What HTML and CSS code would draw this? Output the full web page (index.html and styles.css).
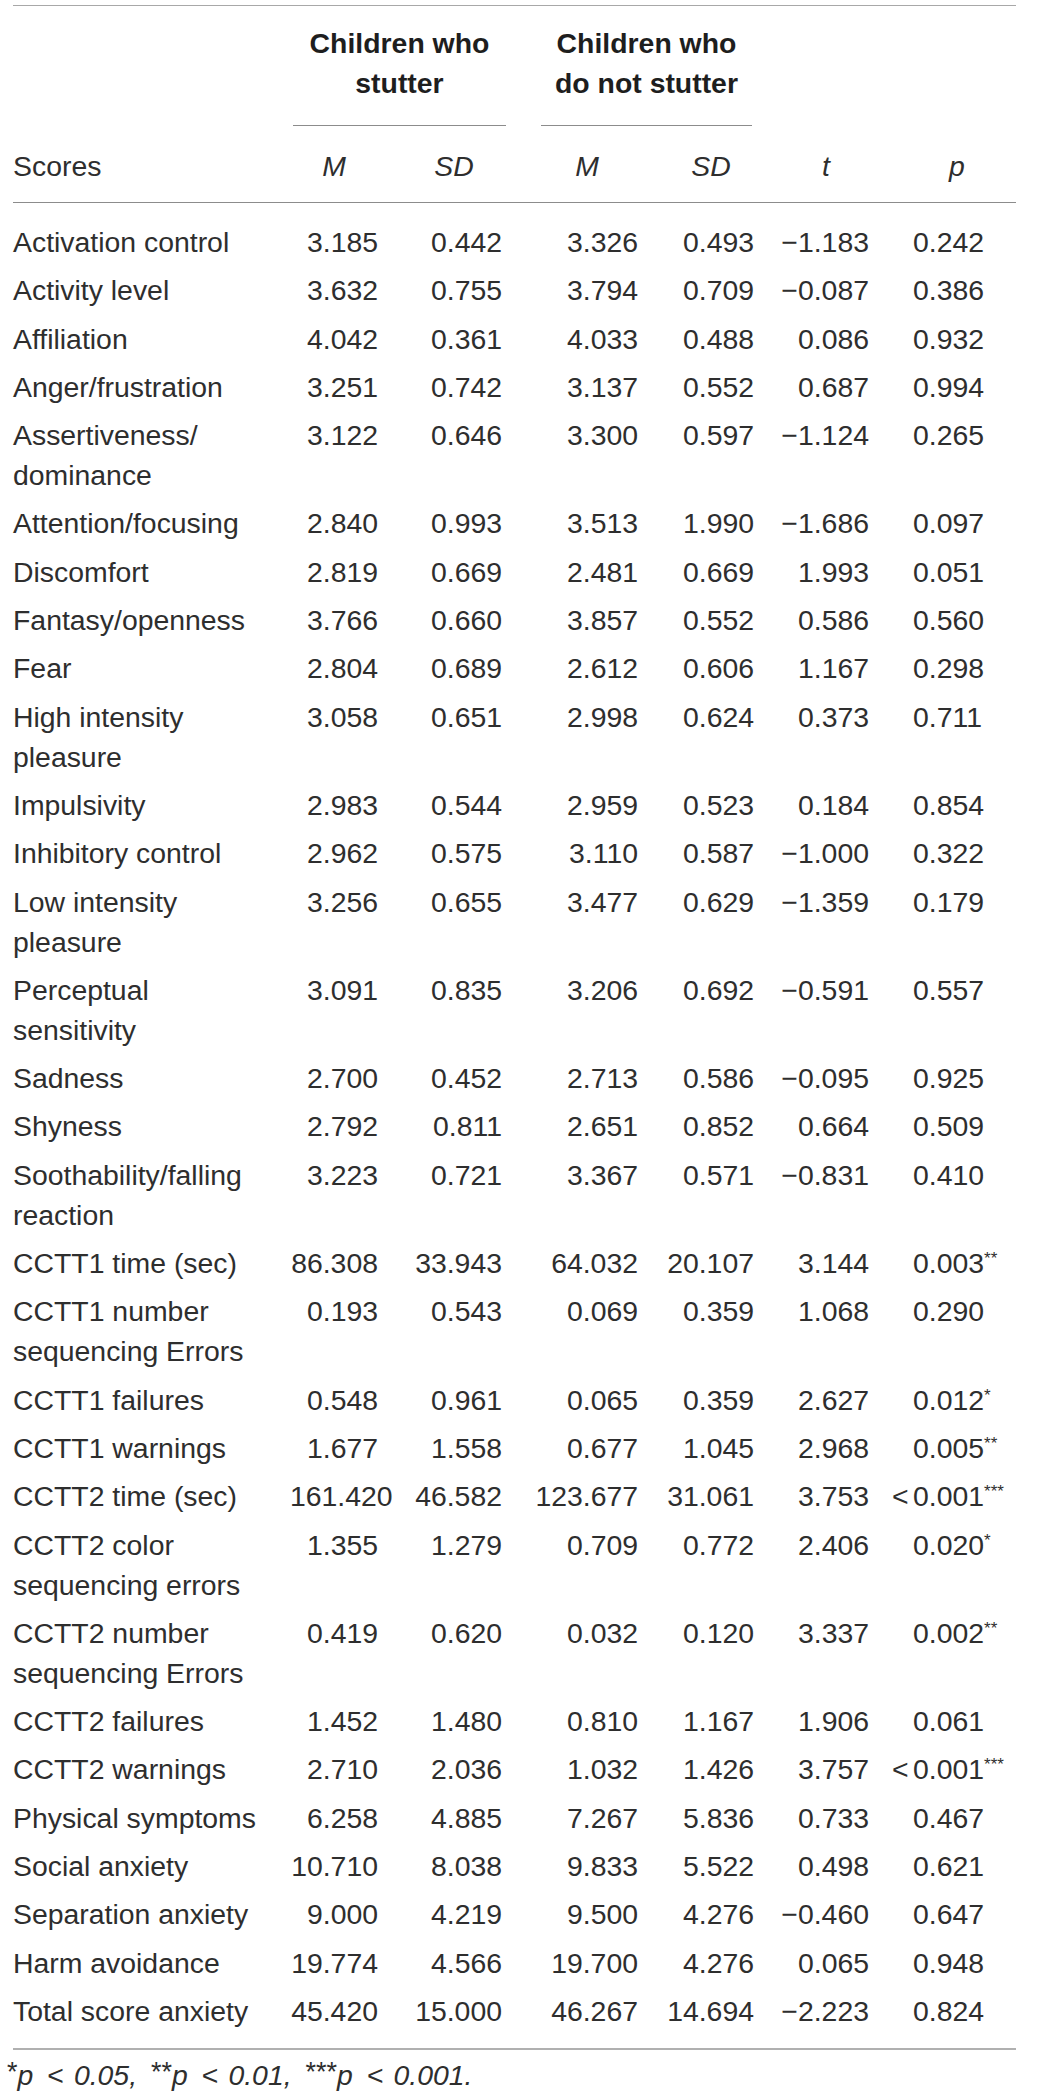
FILE: index.html
```html
<!DOCTYPE html>
<html lang="en">
<head>
    <meta charset="UTF-8">
    <meta name="viewport" content="width=device-width, initial-scale=1.0">
    <title>Temperament and CCTT scores</title>
    <link rel="stylesheet" href="styles.css">
</head>
<body>
    <div class="table-wrap">
        <table class="stats">
            <colgroup>
                <col class="c-name">
                <col class="c-m1">
                <col class="c-sd1">
                <col class="c-m2">
                <col class="c-sd2">
                <col class="c-t">
                <col class="c-p">
            </colgroup>
            <thead>
                <tr class="group-row">
                    <th></th>
                    <th colspan="2"><div class="spanner g1">Children who<br>stutter</div></th>
                    <th colspan="2"><div class="spanner g2">Children who<br>do not stutter</div></th>
                    <th></th>
                    <th></th>
                </tr>
                <tr class="label-row">
                    <th class="name">Scores</th>
                    <th class="h-m1"><i>M</i></th>
                    <th class="h-sd1"><i>SD</i></th>
                    <th class="h-m2"><i>M</i></th>
                    <th class="h-sd2"><i>SD</i></th>
                    <th class="h-t"><i>t</i></th>
                    <th class="h-p"><i>p</i></th>
                </tr>
            </thead>
            <tbody>
                <tr><td class="name">Activation control</td><td>3.185</td><td>0.442</td><td>3.326</td><td>0.493</td><td>&minus;1.183</td><td class="p">0.242</td></tr>
                <tr><td class="name">Activity level</td><td>3.632</td><td>0.755</td><td>3.794</td><td>0.709</td><td>&minus;0.087</td><td class="p">0.386</td></tr>
                <tr><td class="name">Affiliation</td><td>4.042</td><td>0.361</td><td>4.033</td><td>0.488</td><td>0.086</td><td class="p">0.932</td></tr>
                <tr><td class="name">Anger/frustration</td><td>3.251</td><td>0.742</td><td>3.137</td><td>0.552</td><td>0.687</td><td class="p">0.994</td></tr>
                <tr><td class="name">Assertiveness/<br>dominance</td><td>3.122</td><td>0.646</td><td>3.300</td><td>0.597</td><td>&minus;1.124</td><td class="p">0.265</td></tr>
                <tr><td class="name">Attention/focusing</td><td>2.840</td><td>0.993</td><td>3.513</td><td>1.990</td><td>&minus;1.686</td><td class="p">0.097</td></tr>
                <tr><td class="name">Discomfort</td><td>2.819</td><td>0.669</td><td>2.481</td><td>0.669</td><td>1.993</td><td class="p">0.051</td></tr>
                <tr><td class="name">Fantasy/openness</td><td>3.766</td><td>0.660</td><td>3.857</td><td>0.552</td><td>0.586</td><td class="p">0.560</td></tr>
                <tr><td class="name">Fear</td><td>2.804</td><td>0.689</td><td>2.612</td><td>0.606</td><td>1.167</td><td class="p">0.298</td></tr>
                <tr><td class="name">High intensity<br>pleasure</td><td>3.058</td><td>0.651</td><td>2.998</td><td>0.624</td><td>0.373</td><td class="p">0.711</td></tr>
                <tr><td class="name">Impulsivity</td><td>2.983</td><td>0.544</td><td>2.959</td><td>0.523</td><td>0.184</td><td class="p">0.854</td></tr>
                <tr><td class="name">Inhibitory control</td><td>2.962</td><td>0.575</td><td>3.110</td><td>0.587</td><td>&minus;1.000</td><td class="p">0.322</td></tr>
                <tr><td class="name">Low intensity<br>pleasure</td><td>3.256</td><td>0.655</td><td>3.477</td><td>0.629</td><td>&minus;1.359</td><td class="p">0.179</td></tr>
                <tr><td class="name">Perceptual<br>sensitivity</td><td>3.091</td><td>0.835</td><td>3.206</td><td>0.692</td><td>&minus;0.591</td><td class="p">0.557</td></tr>
                <tr><td class="name">Sadness</td><td>2.700</td><td>0.452</td><td>2.713</td><td>0.586</td><td>&minus;0.095</td><td class="p">0.925</td></tr>
                <tr><td class="name">Shyness</td><td>2.792</td><td>0.811</td><td>2.651</td><td>0.852</td><td>0.664</td><td class="p">0.509</td></tr>
                <tr><td class="name">Soothability/falling<br>reaction</td><td>3.223</td><td>0.721</td><td>3.367</td><td>0.571</td><td>&minus;0.831</td><td class="p">0.410</td></tr>
                <tr><td class="name">CCTT1 time (sec)</td><td>86.308</td><td>33.943</td><td>64.032</td><td>20.107</td><td>3.144</td><td class="p">0.003<sup>**</sup></td></tr>
                <tr><td class="name">CCTT1 number<br>sequencing Errors</td><td>0.193</td><td>0.543</td><td>0.069</td><td>0.359</td><td>1.068</td><td class="p">0.290</td></tr>
                <tr><td class="name">CCTT1 failures</td><td>0.548</td><td>0.961</td><td>0.065</td><td>0.359</td><td>2.627</td><td class="p">0.012<sup>*</sup></td></tr>
                <tr><td class="name">CCTT1 warnings</td><td>1.677</td><td>1.558</td><td>0.677</td><td>1.045</td><td>2.968</td><td class="p">0.005<sup>**</sup></td></tr>
                <tr><td class="name">CCTT2 time (sec)</td><td>161.420</td><td>46.582</td><td>123.677</td><td>31.061</td><td>3.753</td><td class="p"><span class="lt">&lt;</span>0.001<sup>***</sup></td></tr>
                <tr><td class="name">CCTT2 color<br>sequencing errors</td><td>1.355</td><td>1.279</td><td>0.709</td><td>0.772</td><td>2.406</td><td class="p">0.020<sup>*</sup></td></tr>
                <tr><td class="name">CCTT2 number<br>sequencing Errors</td><td>0.419</td><td>0.620</td><td>0.032</td><td>0.120</td><td>3.337</td><td class="p">0.002<sup>**</sup></td></tr>
                <tr><td class="name">CCTT2 failures</td><td>1.452</td><td>1.480</td><td>0.810</td><td>1.167</td><td>1.906</td><td class="p">0.061</td></tr>
                <tr><td class="name">CCTT2 warnings</td><td>2.710</td><td>2.036</td><td>1.032</td><td>1.426</td><td>3.757</td><td class="p"><span class="lt">&lt;</span>0.001<sup>***</sup></td></tr>
                <tr><td class="name">Physical symptoms</td><td>6.258</td><td>4.885</td><td>7.267</td><td>5.836</td><td>0.733</td><td class="p">0.467</td></tr>
                <tr><td class="name">Social anxiety</td><td>10.710</td><td>8.038</td><td>9.833</td><td>5.522</td><td>0.498</td><td class="p">0.621</td></tr>
                <tr><td class="name">Separation anxiety</td><td>9.000</td><td>4.219</td><td>9.500</td><td>4.276</td><td>&minus;0.460</td><td class="p">0.647</td></tr>
                <tr><td class="name">Harm avoidance</td><td>19.774</td><td>4.566</td><td>19.700</td><td>4.276</td><td>0.065</td><td class="p">0.948</td></tr>
                <tr><td class="name">Total score anxiety</td><td>45.420</td><td>15.000</td><td>46.267</td><td>14.694</td><td>&minus;2.223</td><td class="p">0.824</td></tr>
            </tbody>
        </table>
        <p class="note"><span class="star">*</span><i>p</i><span class="op">&lt;</span><i class="val">0.05,</i><span class="star">**</span><i>p</i><span class="op">&lt;</span><i class="val">0.01,</i><span class="star">***</span><i>p</i><span class="op">&lt;</span><i>0.001.</i></p>
    </div>
</body>
</html>
```

FILE: styles.css
```css
/* Page */
html {
    background-color: white;
}

body {
    margin: 0;
    padding: 5px 0 0 0;
    color: #2e2e2e;
    font-family: "Liberation Sans", Arial, sans-serif;
    font-size: 28.4px;
    line-height: 40px;
}

.table-wrap {
    width: 1003px;
    margin-left: 13px;
}

/* Table */
.stats {
    width: 1003px;
    table-layout: fixed;
    border-collapse: separate;
    border-spacing: 0;
}

.c-name { width: 277px; }
.c-m1 { width: 88px; }
.c-sd1 { width: 124px; }
.c-m2 { width: 136px; }
.c-sd2 { width: 116px; }
.c-t { width: 115px; }
.c-p { width: 147px; }

.stats th,
.stats td {
    padding: 0;
    vertical-align: top;
    font-weight: normal;
    white-space: nowrap;
}

/* Header rows */
.group-row th {
    border-top: 1px solid #a8a8a8;
    padding-top: 17px;
}

.spanner {
    font-weight: bold;
    color: #1e1e1e;
    text-align: center;
    padding-bottom: 22px;
    border-bottom: 1px solid #8c8c8c;
}

.spanner.g1 {
    margin-left: 3px;
    margin-right: -4px;
}

.spanner.g2 {
    margin-left: 39px;
    margin-right: 2px;
}

.label-row th {
    padding-top: 20px;
    padding-bottom: 16px;
    border-bottom: 1px solid #8c8c8c;
    text-align: center;
}

.label-row th.name {
    text-align: left;
}

.h-sd1 { padding-left: 28px !important; }
.h-m2 { padding-left: 34px !important; }
.h-sd2 { padding-left: 30px !important; }
.h-t { padding-left: 29px !important; }
.h-p { padding-left: 29px !important; }

/* Body rows */
.stats td {
    text-align: right;
    padding-top: 4px;
    padding-bottom: 4.3px;
}

.stats td.name {
    text-align: left;
    white-space: normal;
}

.stats td.p {
    text-align: left;
    padding-left: 44px;
}

.stats tbody tr:first-child td {
    padding-top: 19px;
}

.stats tbody tr:last-child td {
    padding-bottom: 17px;
    border-bottom: 2px solid #b0b0b0;
}

.lt {
    display: inline-block;
    width: 21px;
    margin-left: -21px;
}

sup {
    font-size: 0.6em;
    line-height: 0;
    vertical-align: 0.55em;
}

/* Footnote */
.note {
    margin: 5px 0 0 -6px;
}

.note .star {
    font-size: 0.95em;
    position: relative;
    top: -0.15em;
}

.note .op {
    margin: 0 10px 0 14px;
}

.note .val {
    margin-right: 14px;
}
```
